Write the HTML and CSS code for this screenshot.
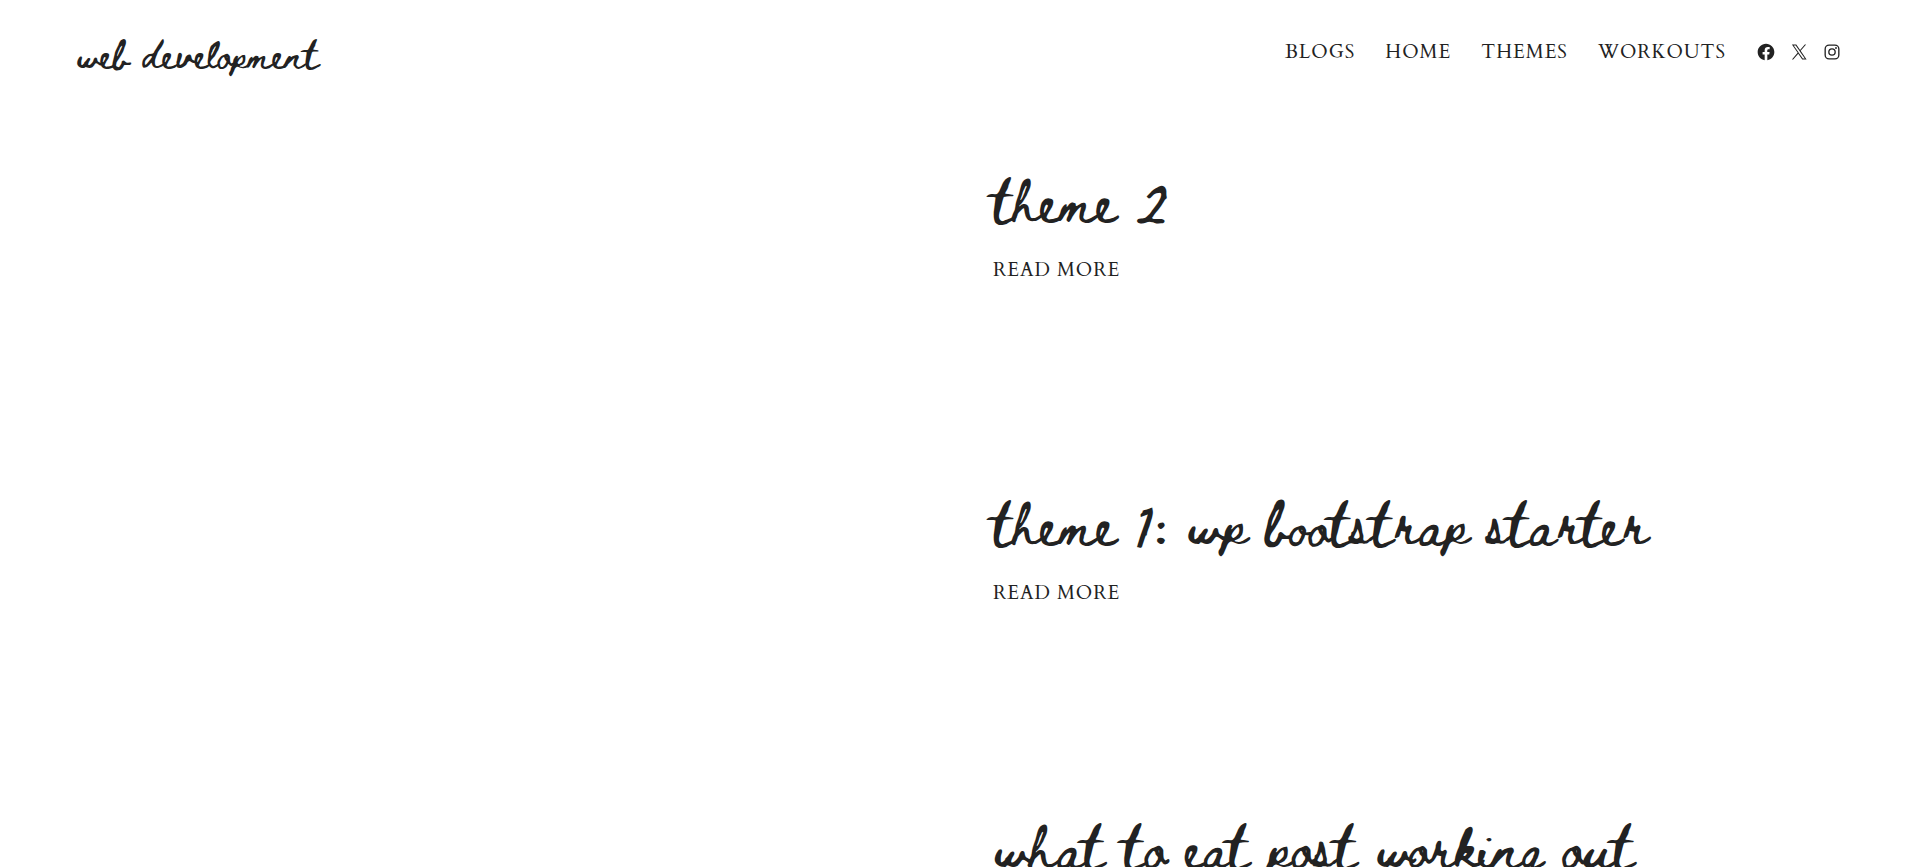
FILE: index.html
```html
<!DOCTYPE html>
<html lang="en">
<head>
  <meta charset="UTF-8" />
  <meta name="viewport" content="width=device-width, initial-scale=1" />
  <title>web development</title>
  <link rel="stylesheet" href="styles.css">
</head>
<body>

  <header class="site-header">
    <a class="site-title" href="#">web development</a>
    <nav class="site-nav">
      <a href="#">Blogs</a>
      <a href="#">Home</a>
      <a href="#">Themes</a>
      <a href="#">Workouts</a>
      <div class="social">
        <a href="#" aria-label="Facebook">
          <svg viewBox="0 0 24 24"><path d="M12 2C6.5 2 2 6.5 2 12c0 5 3.7 9.1 8.4 9.9v-7H7.9V12h2.5V9.8c0-2.5 1.5-3.9 3.8-3.9 1.1 0 2.2.2 2.2.2v2.5h-1.3c-1.2 0-1.6.8-1.6 1.6V12h2.8l-.4 2.9h-2.3v7C18.3 21.1 22 17 22 12c0-5.500-4.500-10-10-10z"/></svg>
        </a>
        <a href="#" aria-label="X">
          <svg viewBox="0 0 24 24"><path d="M13.982 10.622 20.540 3h-1.554l-5.693 6.618L8.745 3H3.500l6.876 10.007L3.500 21h1.554l6.012-6.989L15.868 21h5.245l-7.131-10.378Zm-2.128 2.474-.697-.997-5.543-7.930H8l4.474 6.400.697.996 5.815 8.318h-2.387l-4.745-6.787Z"/></svg>
        </a>
        <a href="#" aria-label="Instagram">
          <svg viewBox="0 0 24 24"><path fill-rule="evenodd" d="M8.500 3h7a5.500 5.500 0 0 1 5.500 5.500v7a5.500 5.500 0 0 1-5.500 5.500h-7a5.500 5.500 0 0 1-5.500-5.500v-7a5.500 5.500 0 0 1 5.500-5.500zm0 1.600a3.900 3.900 0 0 0-3.900 3.900v7a3.900 3.900 0 0 0 3.900 3.900h7a3.900 3.900 0 0 0 3.900-3.900v-7a3.900 3.900 0 0 0-3.900-3.900zM12 7.400a4.600 4.600 0 1 1 0 9.200 4.600 4.600 0 0 1 0-9.200zm0 1.600a3 3 0 1 0 0 6 3 3 0 0 0 0-6z"/><circle cx="16.800" cy="7.200" r="1.100"/></svg>
        </a>
      </div>
    </nav>
  </header>

  <main class="posts">
    <article class="post">
      <div class="post-body">
        <h2><a href="#">theme 2</a></h2>
        <a class="read-more" href="#">Read more</a>
      </div>
    </article>
    <article class="post">
      <div class="post-body">
        <h2><a href="#">theme 1: wp bootstrap starter</a></h2>
        <a class="read-more" href="#">Read more</a>
      </div>
    </article>
    <article class="post">
      <div class="post-body">
        <h2><a href="#">what to eat post working out</a></h2>
        <a class="read-more" href="#">Read more</a>
      </div>
    </article>
  </main>

</body>
</html>
```
FILE: styles.css
```css
body {
  margin: 0;
  background: #fff;
  color: #222;
  font-family: Cardo, "Liberation Serif", serif;
  font-size: 19px;
  line-height: 28px;
}
a {
  color: inherit;
  text-decoration: none;
}
a:hover {
  text-decoration: underline;
}
.site-header {
  display: flex;
  justify-content: space-between;
  align-items: flex-start;
  padding: 33px 71px 0 76px;
}
.site-title {
  font-family: "Beth Ellen", "Liberation Serif", cursive;
  font-size: 28px;
  line-height: 42px;
}
.site-nav {
  display: flex;
  align-items: center;
  gap: 30px;
  padding-top: 5px;
  letter-spacing: 1px;
  text-transform: uppercase;
}
.social {
  display: flex;
  gap: 13px;
}
.social a {
  display: flex;
}
.social svg {
  width: 20px;
  height: 20px;
  fill: currentColor;
}
.posts {
  padding: 95px 73px 0 76px;
}
.post {
  display: grid;
  grid-template-columns: 1fr 1fr;
  gap: 70px;
  min-height: 323px;
}
.post-body {
  grid-column: 2;
}
.post h2 {
  margin: 0 0 26px;
  font-family: "Beth Ellen", "Liberation Serif", cursive;
  font-size: 42px;
  font-weight: normal;
  line-height: 60px;
}
.read-more {
  letter-spacing: 1px;
  text-transform: uppercase;
}
```
